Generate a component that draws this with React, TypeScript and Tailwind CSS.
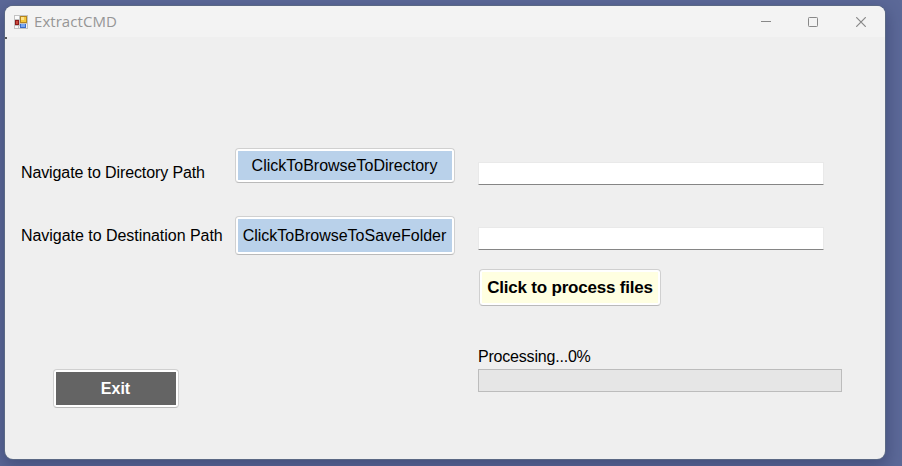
import type { ReactNode } from 'react';

function FormIcon() {
  return (
    <svg width="14" height="14" viewBox="0 0 14 14" shapeRendering="crispEdges" aria-hidden="true">
      <rect width="14" height="14" fill="#c2c2c2" />
      <rect x="1" y="1" width="4" height="3" fill="#fbfbfb" />
      <rect x="1" y="11" width="3" height="2" fill="#f7f7f7" />
      <rect x="5" y="11" width="1" height="2" fill="#eeeeee" />
      <rect x="12" y="9" width="1" height="4" fill="#f2f2f2" />
      <rect x="1" y="5" width="4" height="5" fill="#8d1a1a" />
      <rect x="2" y="6" width="2" height="3" fill="#c94a3c" />
      <rect x="6" y="1" width="7" height="7" fill="#b5851f" />
      <rect x="7" y="2" width="5" height="5" fill="#f5c83c" />
      <rect x="7" y="2" width="3" height="3" fill="#ffe488" />
      <rect x="6" y="9" width="6" height="4" fill="#3a6bc8" />
      <rect x="7" y="9" width="4" height="3" fill="#78a6f0" />
    </svg>
  );
}

function PushButton({ className, children }: { className: string; children: ReactNode }) {
  return (
    <button
      type="button"
      className={`block rounded border border-[#d0d0d0] border-b-[#bababa] bg-white p-[2px] whitespace-nowrap ${className}`}
    >
      {children}
    </button>
  );
}

function PathField({ label }: { label: string }) {
  return (
    <input
      aria-label={label}
      className="block h-[23px] w-[346px] rounded-[1px] border border-[#e9e9e9] border-b-[#858585] bg-white outline-none"
    />
  );
}

export default function App() {
  return (
    <div className="h-[466px] w-[902px] overflow-hidden bg-[#5c6998] pt-[6px] pl-[5px] font-['Liberation_Sans',Arial,sans-serif] text-base leading-[18px] text-black">
      <div className="flex h-[453px] w-[880px] flex-col overflow-hidden rounded-lg bg-[#efefef] shadow-[0_0_0_1px_#5a6884,0_6px_16px_3px_rgba(35,42,85,0.38)]">
        <header className="flex h-[31px] shrink-0 items-center bg-[#f3f3f3] pl-[9px] text-[#969696]">
          <FormIcon />
          <h1 className="ml-[6px] pb-[2px] font-['Open_Sans','Noto_Sans',sans-serif] text-[15px] leading-5 tracking-[0.05px]">ExtractCMD</h1>
          <div className="ml-auto flex items-center pr-[19px]">
            <svg className="mr-[37px]" width="10" height="11" viewBox="0 0 10 11" fill="none" stroke="#888888">
              <path d="M0 5.5H10" />
            </svg>
            <svg className="mr-[38px]" width="10" height="10" viewBox="0 0 10 10" fill="none" stroke="#888888">
              <rect x="0.5" y="0.5" width="9" height="9" rx="0.8" />
            </svg>
            <svg width="10" height="10" viewBox="0 0 10 10" fill="none" stroke="#888888" strokeWidth="1.2">
              <path d="M0.2 0.2L9.8 9.8M9.8 0.2L0.2 9.8" />
            </svg>
          </div>
        </header>
        <div className="h-[2px] w-[2px] shrink-0 bg-[#555555]" />
        <main className="flex pl-4">
          <section className="w-[214px] pt-[125px] whitespace-nowrap">
            <p className="tracking-[-0.11px]">Navigate to Directory Path</p>
            <p className="mt-[45px] tracking-[-0.04px]">Navigate to Destination Path</p>
            <PushButton className="mt-[124px] ml-8 h-[39px] w-[126px] font-bold text-white">
              <span className="flex h-full items-center justify-center bg-[#646464] pr-px">Exit</span>
            </PushButton>
          </section>
          <section className="w-[243px] pt-[109px]">
            <PushButton className="h-[35px] w-[220px]">
              <span className="flex h-full items-center justify-center bg-[#b9d1ea] pr-px">ClickToBrowseToDirectory</span>
            </PushButton>
            <PushButton className="mt-[33px] h-[39px] w-[220px]">
              <span className="flex h-full items-center justify-center bg-[#b9d1ea] pr-px">ClickToBrowseToSaveFolder</span>
            </PushButton>
          </section>
          <section className="pt-[123px]">
            <PathField label="Directory path" />
            <div className="mt-[42px]">
              <PathField label="Destination path" />
            </div>
            <PushButton className="mt-[19px] ml-px h-[37px] w-[182px] text-[17px] font-bold tracking-[-0.21px]">
              <span className="flex h-full items-center justify-center bg-[#ffffe1]">Click to process files</span>
            </PushButton>
            <p className="mt-[42px] tracking-[-0.2px]">Processing...0%</p>
            <div className="mt-[3px] h-[23px] w-[364px] border border-[#bcbcbc] bg-[#e6e6e6]" />
          </section>
        </main>
      </div>
    </div>
  );
}
